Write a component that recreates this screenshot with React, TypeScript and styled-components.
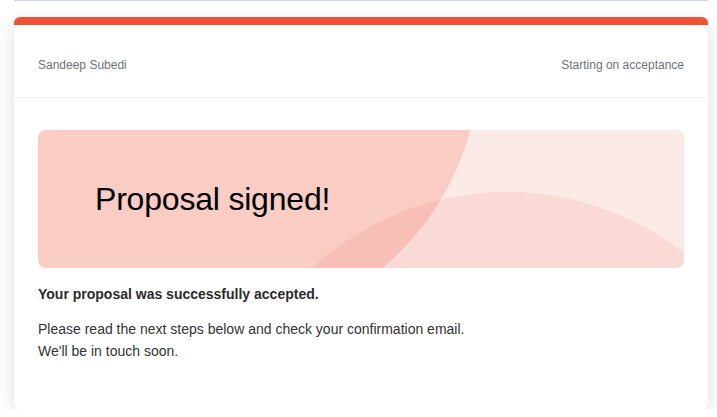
import styled, { createGlobalStyle } from 'styled-components';

const GlobalStyle = createGlobalStyle`
	html, body {
		margin: 0;
		padding: 0;
		background: #ffffff;
		font-family: 'Liberation Sans', Arial, sans-serif;
	}
`;

const Page = styled.div`
	width: 694px;
	margin-left: 14px;
	display: flex;
	flex-direction: column;
`;

const TopRule = styled.div`
	height: 1px;
	background: #cfd5e3;
	margin-bottom: 16px;
`;

const Card = styled.div`
	background: #fff;
	border-top: 8px solid #f05237;
	border-radius: 6px;
	box-shadow: 0 6px 20px rgba(0, 0, 0, 0.13);
	display: flex;
	flex-direction: column;
`;

const CardHeader = styled.div`
	display: flex;
	justify-content: space-between;
	align-items: center;
	padding: 32px 24px 24px;
	border-bottom: 1px solid #eeeff2;
	font-size: 12px;
	line-height: 16px;
	color: #6f7278;
`;

const CardBody = styled.div`
	padding: 32px 24px 31px;
	display: flex;
	flex-direction: column;
`;

const Banner = styled.div`
	position: relative;
	height: 138px;
	border-radius: 8px;
	background: #fbeae6;
	overflow: hidden;
	display: flex;
	align-items: center;
	padding-left: 57px;
`;

const BannerArt = styled.svg`
	position: absolute;
	inset: 0;
	width: 100%;
	height: 100%;
`;

const BannerTitle = styled.h1`
	position: relative;
	margin: 0;
	font-weight: 400;
	font-size: 32px;
	line-height: 40px;
	color: #000;
	letter-spacing: -0.2px;
`;

const Lead = styled.p`
	margin: 16px 0 14px;
	font-size: 14px;
	font-weight: 700;
	line-height: 20px;
	color: #2b2b2b;
`;

const Note = styled.p`
	margin: 0 0 16px;
	font-size: 14px;
	line-height: 22px;
	color: #333;
`;

export default function App() {
	return (
		<>
			<GlobalStyle />
			<Page>
				<TopRule />
				<Card>
					<CardHeader>
						<span>Sandeep Subedi</span>
						<span>Starting on acceptance</span>
					</CardHeader>
					<CardBody>
						<Banner>
							<BannerArt viewBox="0 0 646 138" preserveAspectRatio="none">
								<circle cx="167" cy="-72" r="275" fill="#f9cdc4" />
								<circle cx="469" cy="350" r="288" fill="rgba(239, 82, 54, 0.1)" />
							</BannerArt>
							<BannerTitle>Proposal signed!</BannerTitle>
						</Banner>
						<Lead>Your proposal was successfully accepted.</Lead>
						<Note>
							Please read the next steps below and check your confirmation email.
							<br />
							We'll be in touch soon.
						</Note>
					</CardBody>
				</Card>
			</Page>
		</>
	);
}
